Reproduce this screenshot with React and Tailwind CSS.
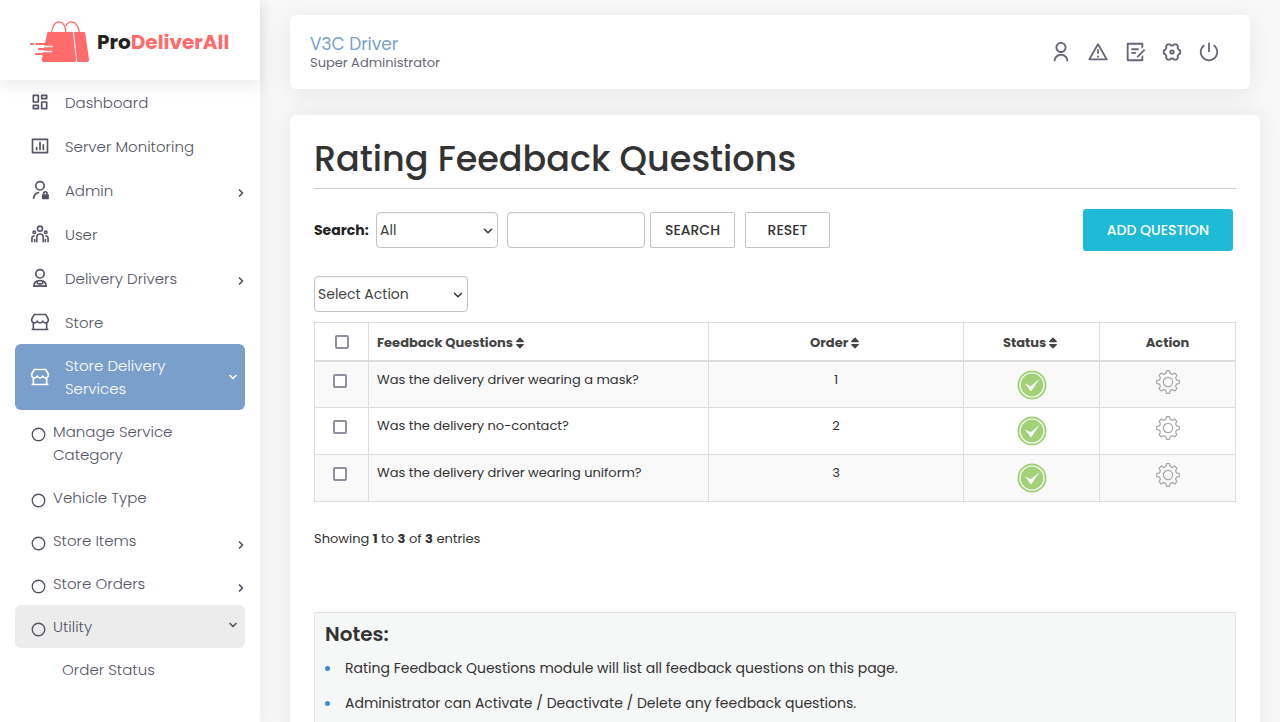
import React, { useState } from 'react';
import {
    RiDashboardLine,
    RiBarChartBoxLine,
    RiStore2Line,
    RiUserLine,
    RiAlertLine,
    RiDraftLine,
    RiShutDownLine,
} from 'react-icons/ri';
import { FaSort } from 'react-icons/fa';
import { ChevronRight, ChevronDown, Circle } from 'lucide-react';

const AdminIcon = (props) => (
    <svg viewBox="-1 -1 26 26" fill="none" stroke="currentColor" strokeWidth="2.2" {...props}>
        <circle cx="12" cy="6.500" r="5.500" />
        <path d="M3.500 23.500c.5-5 3.500-8 7.500-8.500" />
        <path d="M16.800 18v-1.500a2.200 2.200 0 0 1 4.400 0V18" />
        <rect x="14.500" y="17.500" width="9" height="6.500" rx=".5" fill="currentColor" stroke="none" />
    </svg>
);

const UsersIcon = (props) => (
    <svg viewBox="-2 -1 28 26" fill="none" stroke="currentColor" strokeWidth="2.2" {...props}>
        <circle cx="12" cy="4.500" r="3.500" />
        <circle cx="4" cy="9.500" r="1.800" />
        <circle cx="20" cy="9.500" r="1.800" />
        <path d="M7.500 23.500v-7a4.500 4.500 0 0 1 9 0v7" />
        <path d="M.7 23.500v-6c0-2 1.500-3.200 3.800-3M23.300 23.500v-6c0-2-1.500-3.200-3.800-3M4.500 23.500V19M19.500 23.500V19" />
    </svg>
);

const DriverIcon = (props) => (
    <svg viewBox="-1 -1 26 26" fill="none" stroke="currentColor" strokeWidth="2.2" {...props}>
        <circle cx="12" cy="6.500" r="5.500" />
        <path d="M4 22.500c.3-4.500 3.500-7 8-7s7.700 2.500 8 7z" />
        <path d="M8.500 16v3.500h7V16M12 19.500v3" strokeWidth="1.700" />
    </svg>
);

const SettingsIcon = (props) => (
    <svg viewBox="-1 -1 26 26" fill="none" stroke="currentColor" strokeWidth="2.2" strokeLinejoin="round" {...props}>
        <path d="M6.500 3h3l1.200 1.300h2.600L14.500 3h3L19 5.500l-.3 1.800 1.300 2.200 1.700.7v3.600l-1.700.7-1.300 2.200.3 1.800L17.500 21h-3l-1.200-1.300h-2.600L9.500 21h-3L5 18.500l.3-1.800L4 14.500l-1.700-.7v-3.600L4 9.500l1.300-2.200L5 5.500z" />
        <circle cx="12" cy="12" r="2" />
    </svg>
);

const GearIcon = (props) => (
    <svg viewBox="0 0 24 24" fill="none" stroke="currentColor" strokeWidth="1.200" strokeLinejoin="round" {...props}>
        <path d="M10.500.7h3l.6 2.800 2.200.9L18.700 3l2.300 2.300-1.400 2.400.9 2.200 2.800.6v3l-2.800.6-.9 2.200 1.400 2.400-2.300 2.300-2.400-1.400-2.200.9-.6 2.800h-3l-.6-2.800-2.200-.9L5.300 21 3 18.700l1.400-2.400-.9-2.200-2.800-.6v-3l2.800-.6.9-2.200L3 5.300 5.300 3l2.400 1.400 2.200-.9z" />
        <circle cx="12" cy="12" r="4.600" />
    </svg>
);

const StatusIcon = (props) => (
    <svg viewBox="0 0 30 30" {...props}>
        <circle cx="15" cy="15" r="14.500" fill="#a2d179" />
        <circle cx="15" cy="15" r="12" fill="none" stroke="#fff" strokeWidth="1.200" />
        <path d="M8 13.500l5.800 2.700L22.500 9l-8.500 12.500z" fill="#fff" />
    </svg>
);

const LogoMark = (props) => (
    <svg viewBox="0 0 60 42" fill="none" {...props}>
        <path d="M17.500 11h25.300l3.200 27.500c.2 1.400-.3 2.500-1.600 2.500H14c-1.600 0-2.400-1-2.200-2.500l.5-4z" fill="#ff6b6b" />
        <path d="M44 11h9.500c1.100 0 1.600.6 1.800 1.600L59 38.500c.2 1.500-.6 2.500-2 2.500h-8.500c-.9 0-1.400-.6-1.500-1.500z" fill="#ff6b6b" />
        <path d="M21.500 12C22 5.500 25 .8 29.200.8S35.500 5 36 12M35.500 5C37 2.200 39 .8 41.500.8c4 0 7 4.700 8 11.200" stroke="#ff6b6b" strokeWidth="1.300" />
        <path d="M10 25.500h12M8 30.500h13.500M8 35.200h4" stroke="#fff" strokeWidth="1.500" strokeLinecap="round" />
        <path d="M10 20.500h5" stroke="#fff" strokeWidth="1" />
        <path d="M1 23h2M6.500 23h18M9 28h14.500M6 33h15" stroke="#ff6b6b" strokeWidth="2.200" strokeLinecap="round" />
    </svg>
);

const menuItems = [
    { label: 'Dashboard', icon: RiDashboardLine },
    { label: 'Server Monitoring', icon: RiBarChartBoxLine },
    { label: 'Admin', icon: AdminIcon, hasChildren: true },
    { label: 'User', icon: UsersIcon },
    { label: 'Delivery Drivers', icon: DriverIcon, hasChildren: true },
    { label: 'Store', icon: RiStore2Line },
];

const subItems = [
    { label: 'Manage Service Category' },
    { label: 'Vehicle Type' },
    { label: 'Store Items', hasChildren: true },
    { label: 'Store Orders', hasChildren: true },
    { label: 'Utility', open: true },
];

const headerLinks = [
    { label: 'Profile', icon: RiUserLine },
    { label: 'Alerts', icon: RiAlertLine },
    { label: 'Notes', icon: RiDraftLine },
    { label: 'Settings', icon: SettingsIcon },
    { label: 'Log out', icon: RiShutDownLine },
];

const questions = [
    { id: 1, text: 'Was the delivery driver wearing a mask?', order: 1 },
    { id: 2, text: 'Was the delivery no-contact?', order: 2 },
    { id: 3, text: 'Was the delivery driver wearing uniform?', order: 3 },
];

const notes = [
    'Rating Feedback Questions module will list all feedback questions on this page.',
    'Administrator can Activate / Deactivate / Delete any feedback questions.',
];

const checkboxClass =
    'block size-3.5 appearance-none rounded-xs border-2 border-[#8f8f9f] bg-white checked:bg-[#7a9fcb]';
const fieldClass = 'h-9 rounded-sm border border-[#c4c4c4] bg-white text-sm text-[#444] shadow-[inset_0_1px_2px_rgba(0,0,0,0.06)]';
const buttonClass = 'h-9 w-[85px] rounded-xs border border-[#c4c4c4] bg-white text-sm font-medium text-[#333]';

const Select = ({ className, children, ...props }) => (
    <div className={`relative ${className}`}>
        <select className={`w-full appearance-none px-[3px] ${fieldClass}`} {...props}>
            {children}
        </select>
        <ChevronDown className="pointer-events-none absolute top-3 right-[3px] size-3.5 text-[#333]" strokeWidth={2.5} />
    </div>
);

const Sidebar = () => (
    <aside className="w-[260px] shrink-0 bg-white shadow-[0_0_20px_rgba(0,0,0,0.08)]">
        <a href="#home" className="flex h-20 items-center gap-[7px] pt-1 pl-[30px] shadow-[0_6px_14px_rgba(0,0,0,0.08)]">
            <LogoMark className="h-[42px] w-[60px]" />
            <span className="text-xl font-bold text-[#222]">
                Pro<span className="text-[#ff6b6b]">DeliverAll</span>
            </span>
        </a>
        <nav className="px-[15px] text-[15px] leading-[23px] font-light text-[#545464]">
            {menuItems.map((item) => (
                <a key={item.label} href="#menu" className="flex h-11 items-center pl-[15px]">
                    <item.icon className="mr-[15px] size-5 shrink-0" />
                    <span className="flex-1">{item.label}</span>
                    {item.hasChildren && <ChevronRight className="mt-1.5 -mr-0.5 size-3" strokeWidth={3.5} />}
                </a>
            ))}
            <a href="#menu" className="flex items-center rounded-md bg-[#7a9fcb] py-2.5 pr-1.5 pl-[15px] text-white">
                <RiStore2Line className="mr-[15px] size-5 shrink-0" />
                <span className="w-[130px]">Store Delivery Services</span>
                <ChevronDown className="ml-auto size-3" strokeWidth={3.5} />
            </a>
            {subItems.map((item) => (
                <a
                    key={item.label}
                    href="#menu"
                    className={`flex rounded-md py-2.5 pl-4 ${item.open ? 'bg-[#ececec] pr-1.5' : ''}`}
                >
                    <Circle className="mt-[7px] mr-[7px] size-[15px] shrink-0" strokeWidth={2.2} />
                    <span className="w-[150px]">{item.label}</span>
                    {item.hasChildren && <ChevronRight className="mt-2.5 -mr-0.5 ml-auto size-3" strokeWidth={3.5} />}
                    {item.open && <ChevronDown className="mt-1 ml-auto size-3" strokeWidth={3.5} />}
                </a>
            ))}
            <a href="#menu" className="block py-2.5 pl-[47px]">Order Status</a>
        </nav>
    </aside>
);

const Header = () => (
    <header className="mr-2.5 flex items-center justify-between rounded-md bg-white px-5 py-[18px] shadow-[0_4px_25px_rgba(0,0,0,0.08)]">
        <div>
            <p className="text-[17px] leading-[22px] text-[#7a9fcb]">V3C Driver</p>
            <p className="text-[13px] leading-4 text-[#666676]">Super Administrator</p>
        </div>
        <div className="flex gap-[15px] pr-2.5">
            {headerLinks.map((link) => (
                <a key={link.label} href="#header" aria-label={link.label} className="text-[#666676]">
                    <link.icon className="size-[22px]" />
                </a>
            ))}
        </div>
    </header>
);

const QuestionsTable = () => (
    <table className="mt-2.5 w-full table-fixed border-collapse text-[13px] text-[#333] [&_td]:border [&_td]:border-[#ddd] [&_th]:border [&_th]:border-[#ddd]">
        <thead>
            <tr className="h-[38px] text-[#444] [&_th]:border-b-2 [&_th]:pt-0.5">
                <th className="w-[54px]">
                    <input type="checkbox" aria-label="Select all" className={`mx-auto ${checkboxClass}`} />
                </th>
                <th className="w-[340px] px-2 text-left font-bold">
                    Feedback Questions <FaSort className="-ml-[3px] inline size-3.5" />
                </th>
                <th className="font-bold">
                    Order <FaSort className="-ml-[3px] inline size-3.5" />
                </th>
                <th className="w-[136px] font-bold">
                    Status <FaSort className="-ml-[3px] inline size-3.5" />
                </th>
                <th className="w-[136px] font-bold">Action</th>
            </tr>
        </thead>
        <tbody>
            {questions.map((question) => (
                <tr key={question.id} className="h-[47px] align-top odd:bg-[#f9f9f9]">
                    <td className="pt-3 pl-[18px]">
                        <input type="checkbox" aria-label={question.text} className={checkboxClass} />
                    </td>
                    <td className="px-2 pt-2">{question.text}</td>
                    <td className="pt-2 text-center">{question.order}</td>
                    <td className="pt-2">
                        <StatusIcon className="mx-auto size-[30px]" />
                    </td>
                    <td className="pt-2">
                        <button type="button" aria-label="Actions" className="mx-auto block text-[#a6a6a6]">
                            <GearIcon className="size-6" />
                        </button>
                    </td>
                </tr>
            ))}
        </tbody>
    </table>
);

const App = () => {
    const [keyword, setKeyword] = useState('');

    return (
        <div className="flex h-screen overflow-hidden bg-[#f8f8f8] font-['Poppins','Inter',sans-serif]">
            <Sidebar />
            <div className="min-w-0 flex-1 py-[15px] pr-5 pl-[30px]">
                <Header />
                <main className="mt-[26px] rounded-md bg-white px-6 pt-[22px] pb-6 shadow-[0_0_25px_rgba(0,0,0,0.08)]">
                    <h1 className="border-b border-[#c9cccb] pb-2 text-[35px] leading-[43px] font-medium text-[#333]">
                        Rating Feedback Questions
                    </h1>
                    <form className="mt-5 flex items-center pr-[3px]" onSubmit={(e) => e.preventDefault()}>
                        <label htmlFor="field" className="w-[62px] text-sm font-bold text-[#222]">Search:</label>
                        <Select id="field" className="w-[122px]">
                            <option>All</option>
                            <option>Feedback Questions</option>
                        </Select>
                        <input
                            type="text"
                            aria-label="Keyword"
                            value={keyword}
                            onChange={(e) => setKeyword(e.target.value)}
                            className={`ml-[9px] w-[138px] px-2 ${fieldClass}`}
                        />
                        <button type="submit" className={`ml-[5px] ${buttonClass}`}>SEARCH</button>
                        <button type="button" onClick={() => setKeyword('')} className={`ml-2.5 ${buttonClass}`}>RESET</button>
                        <button type="button" className="ml-auto h-[42px] w-[150px] rounded-[3px] bg-[#1fbad6] text-sm font-medium text-white">
                            ADD QUESTION
                        </button>
                    </form>
                    <Select aria-label="Select Action" className="mt-[25px] w-[154px]">
                        <option>Select Action</option>
                        <option>Activate</option>
                        <option>Deactivate</option>
                        <option>Delete</option>
                    </Select>
                    <QuestionsTable />
                    <p className="mt-[27px] text-[13px] leading-5 text-[#333]">
                        Showing <b>1</b> to <b>3</b> of <b>3</b> entries
                    </p>
                    <section className="mt-[63px] border border-[#e3e3e3] bg-[#f6f7f7] px-2.5 pt-[7px] pb-5 text-[#333]">
                        <h2 className="text-xl leading-7 font-semibold">Notes:</h2>
                        <ul className="mt-2.5 space-y-[15px] text-sm leading-5">
                            {notes.map((note) => (
                                <li key={note} className="flex items-center">
                                    <span className="mr-[15px] size-[5px] rounded-full bg-[#428bca]" />
                                    {note}
                                </li>
                            ))}
                        </ul>
                    </section>
                </main>
            </div>
        </div>
    );
};

export default App;
